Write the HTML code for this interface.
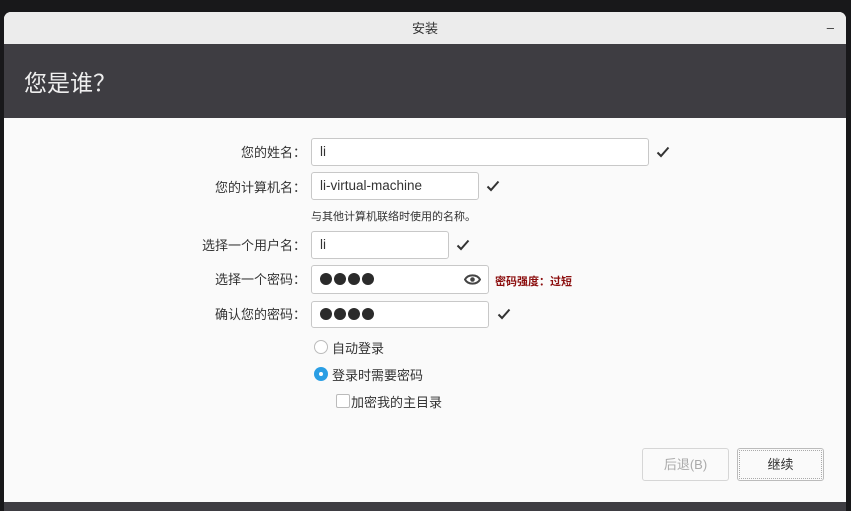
<!DOCTYPE html><html><head><meta charset="utf-8"><style>
body{margin:0;width:851px;height:511px;background:#18181a;overflow:hidden;font-family:"Liberation Sans","Noto Sans CJK SC",sans-serif;position:relative}
.win{position:absolute;left:4px;top:12px;width:842px;height:499px;border-radius:7px 7px 0 0;overflow:hidden;background:#fafafa}
.tb{position:absolute;left:0;top:0;width:100%;height:32px;background:#ececec;text-align:center;line-height:34px;font-size:13px;color:#333}
.hd{position:absolute;left:0;top:32px;width:100%;height:74px;background:#3e3d42;color:#eee;font-size:23px;font-family:"Noto Sans CJK SC",sans-serif}
.hd span{position:absolute;left:20px;top:20px}
.bot{position:absolute;left:0;top:490px;width:100%;height:9px;background:#3e3d42}
.a{position:absolute;font-size:13px;color:#333;white-space:nowrap}
.lab{text-align:right;width:200px}
.in{position:absolute;background:#fff;border:1px solid #c8c8c8;border-radius:3px;box-sizing:border-box;font-size:13.5px;color:#333;padding-left:8px}
.ck{position:absolute}
.dots{display:inline-flex;gap:2px;vertical-align:middle;margin-top:-2px}
.dots i{width:12px;height:12px;border-radius:50%;background:#2b2b2b;display:block}
.btn{position:absolute;top:436px;height:33px;width:87px;border:1px solid #d6d6d6;border-radius:3px;box-sizing:border-box;text-align:center;line-height:31px;font-size:13px;background:#fafafa}
</style></head><body>
<svg width="0" height="0" style="position:absolute"><defs><symbol id="c" viewBox="0 0 14 12"><path d="M1.5 6.5L5 10L12.5 1.5" fill="none" stroke="#333" stroke-width="2"/></symbol></defs></svg>
<div class="win">
<div class="tb">安装</div><div class="a" style="right:12px;top:8px;font-size:13px">–</div>
<div class="hd"><span>您是谁？</span></div>
<div class="a lab" style="left:102px;top:130px">您的姓名：</div>
<div class="in" style="left:307px;top:126px;width:338px;height:28px;line-height:26px">li</div>
<svg class="ck" style="left:652px;top:134px" width="14" height="12"><use href="#c"/></svg>
<div class="a lab" style="left:102px;top:165px">您的计算机名：</div>
<div class="in" style="left:307px;top:160px;width:168px;height:28px;line-height:26px">li-virtual-machine</div>
<svg class="ck" style="left:482px;top:168px" width="14" height="12"><use href="#c"/></svg>
<div class="a" style="left:307px;top:196px;font-size:11px">与其他计算机联络时使用的名称。</div>
<div class="a lab" style="left:102px;top:223px">选择一个用户名：</div>
<div class="in" style="left:307px;top:219px;width:138px;height:28px;line-height:26px">li</div>
<svg class="ck" style="left:452px;top:227px" width="14" height="12"><use href="#c"/></svg>
<div class="a lab" style="left:102px;top:257px">选择一个密码：</div>
<div class="in" style="left:307px;top:253px;width:178px;height:29px;line-height:27px"><span class="dots"><i></i><i></i><i></i><i></i></span>
<svg style="position:absolute;right:7px;top:7px" width="17" height="13" viewBox="0 0 17 13"><path d="M1 6.5C4 1 13 1 16 6.5C13 12 4 12 1 6.5Z" fill="none" stroke="#444" stroke-width="2"/><circle cx="8.5" cy="6.5" r="2.3" fill="#444"/></svg></div>
<div class="a" style="left:491px;top:261px;font-size:11px;color:#8b0d0d;font-weight:bold">密码强度：过短</div>
<div class="a lab" style="left:102px;top:292px">确认您的密码：</div>
<div class="in" style="left:307px;top:289px;width:178px;height:27px;line-height:25px"><span class="dots"><i></i><i></i><i></i><i></i></span></div>
<svg class="ck" style="left:493px;top:296px" width="14" height="12"><use href="#c"/></svg>
<div style="position:absolute;left:310px;top:328px;width:12px;height:12px;border:1px solid #bbb;border-radius:50%;background:#fff"></div>
<div class="a" style="left:328px;top:326px">自动登录</div>
<div style="position:absolute;left:310px;top:355px;width:14px;height:14px;border-radius:50%;background:#2a9ee4"><div style="position:absolute;left:5px;top:5px;width:4px;height:4px;border-radius:50%;background:#fff"></div></div>
<div class="a" style="left:328px;top:353px">登录时需要密码</div>
<div style="position:absolute;left:332px;top:382px;width:12px;height:12px;border:1px solid #bbb;border-radius:2px;background:#fff"></div>
<div class="a" style="left:347px;top:380px">加密我的主目录</div>
<div class="btn" style="left:638px;color:#aaa">后退(B)</div>
<div class="btn" style="left:733px;color:#333;border-color:#bbb;outline:1px dotted #aaa;outline-offset:-3px">继续</div>
<div class="bot"></div>
</div>
</body></html>
